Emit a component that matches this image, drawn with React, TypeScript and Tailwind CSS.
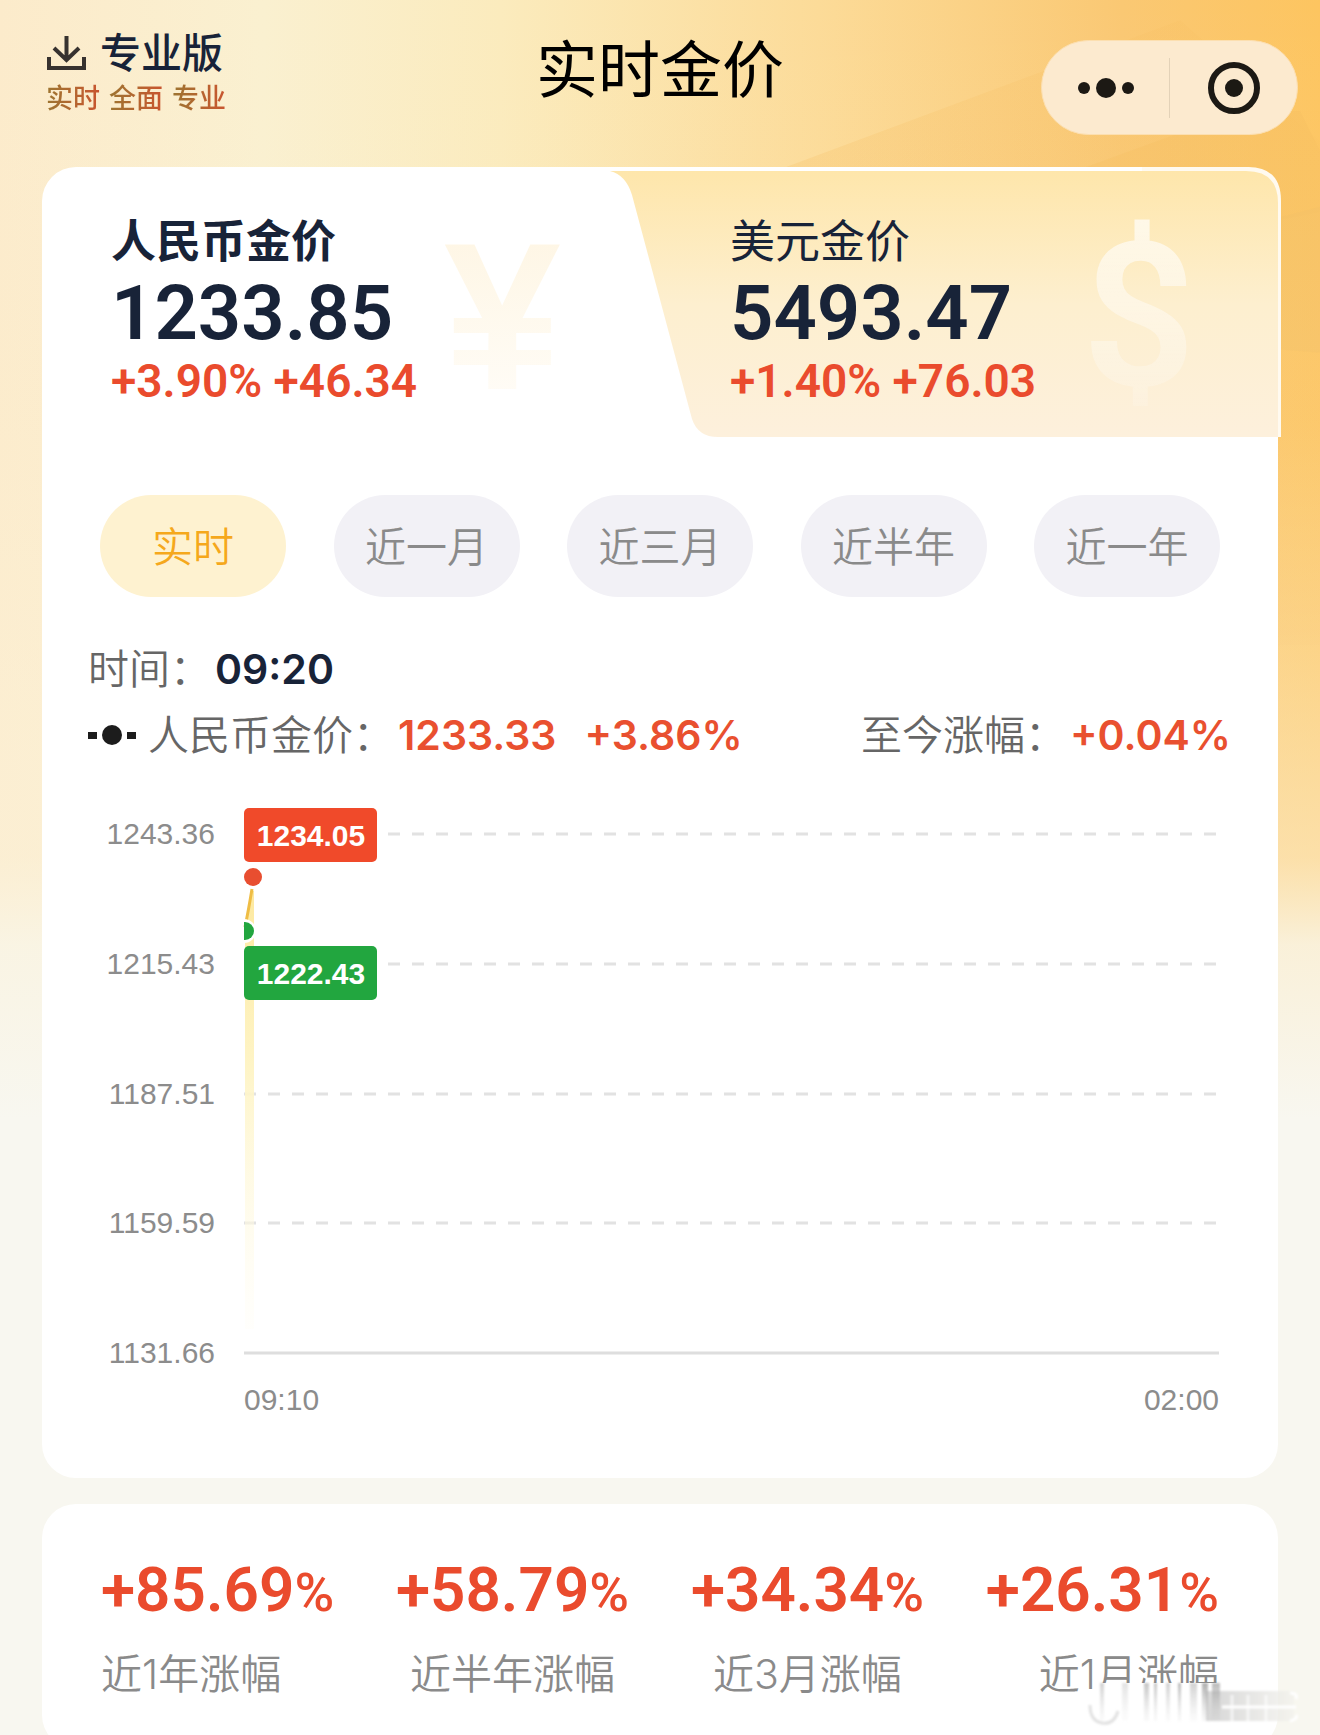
import React from 'react';

const ranges = ['实时', '近一月', '近三月', '近半年', '近一年'];

const stats = [
  { label: '近1年涨幅', value: '+85.69', align: 'items-start' },
  { label: '近半年涨幅', value: '+58.79', align: 'items-center' },
  { label: '近3月涨幅', value: '+34.34', align: 'items-center' },
  { label: '近1月涨幅', value: '+26.31', align: 'items-end' },
];

const gridRows = [
  { y: 55, label: '1243.36', from: 306 },
  { y: 185, label: '1215.43', from: 306 },
  { y: 315, label: '1187.51', from: 162 },
  { y: 444, label: '1159.59', from: 162 },
];

const Backdrop: React.FC = () => (
  <svg
    className="absolute inset-0 h-full w-full"
    viewBox="0 0 1320 1735"
    preserveAspectRatio="none"
    aria-hidden="true"
  >
    <defs>
      <linearGradient id="sky" x1="0" y1="0" x2="1320" y2="0" gradientUnits="userSpaceOnUse">
        <stop offset="0" stopColor="#fcebcb" />
        <stop offset="0.2" stopColor="#faf0d0" />
        <stop offset="0.38" stopColor="#fbebbd" />
        <stop offset="0.62" stopColor="#fcdb98" />
        <stop offset="0.85" stopColor="#fac873" />
        <stop offset="1" stopColor="#fdc560" />
      </linearGradient>
      <linearGradient id="fade" x1="0" y1="0" x2="0" y2="1735" gradientUnits="userSpaceOnUse">
        <stop offset="0" stopColor="#fbf3dc" stopOpacity="0" />
        <stop offset="0.24" stopColor="#fbf3dc" stopOpacity="0.1" />
        <stop offset="0.36" stopColor="#fbf3dc" stopOpacity="0.3" />
        <stop offset="0.49" stopColor="#fbf1d8" stopOpacity="0.6" />
        <stop offset="0.54" stopColor="#f9f5e6" stopOpacity="0.9" />
        <stop offset="0.64" stopColor="#f8f7f0" />
      </linearGradient>
      <linearGradient id="ray" x1="780" y1="168" x2="1320" y2="0" gradientUnits="userSpaceOnUse">
        <stop offset="0" stopColor="#f5bb5c" stopOpacity="0.25" />
        <stop offset="1" stopColor="#f5bb5c" stopOpacity="0.1" />
      </linearGradient>
    </defs>
    <rect width="1320" height="1735" fill="url(#sky)" />
    <path d="M780 168L1180 20L1320 140V640H780z" fill="url(#ray)" />
    <path d="M1080 168L1240 110H1300L1320 150V210L1270 220z" fill="#f5bc5e" opacity="0.3" />
    <path d="M1270 218L1320 205V350L1270 346z" fill="#f3bd62" opacity="0.4" />
    <rect width="1320" height="1735" fill="url(#fade)" />
  </svg>
);

const Header: React.FC = () => (
  <header className="relative grid h-[167px] grid-cols-[1fr_auto_1fr] items-start px-[22px]">
    <a href="#pro" className="flex flex-col pt-[28px] pl-6">
      <span className="flex items-center gap-3 text-[41px] leading-[50px] font-medium text-[#182338]">
        <svg width="42" height="38" viewBox="0 0 42 38" fill="none" stroke="#37322f" strokeWidth="4" aria-hidden="true">
          <path d="M3 23v11h35V23" />
          <path d="M20.500 2v23M8 14l12.500 12L33 14" />
        </svg>
        专业版
      </span>
      <span className="flex gap-[9px] text-[27px] leading-[42px] font-medium">
        {['实时', '全面', '专业'].map(word => (
          <span key={word} className="bg-linear-to-r from-[#9c7430] to-[#c9542f] bg-clip-text text-transparent">
            {word}
          </span>
        ))}
      </span>
    </a>
    <h1 className="pt-[35px] text-[62px] leading-[72px] text-black">实时金价</h1>
    <div className="mt-[40px] flex h-[95px] w-[257px] items-center justify-self-end rounded-full border border-[#fcdfb0] bg-[#fceacf]">
      <button type="button" aria-label="更多" className="flex flex-1 items-center justify-center">
        <svg width="58" height="24" viewBox="0 0 58 24" fill="#1c1914">
          <circle cx="7" cy="12" r="6" />
          <circle cx="29" cy="12" r="10" />
          <circle cx="51" cy="12" r="6" />
        </svg>
      </button>
      <span className="h-[60px] w-px bg-[#e3d2b8]" />
      <button type="button" aria-label="关闭" className="flex flex-1 items-center justify-center">
        <svg width="54" height="54" viewBox="0 0 54 54">
          <circle cx="27" cy="27" r="23" fill="none" stroke="#1c1914" strokeWidth="6" />
          <circle cx="27" cy="27" r="9" fill="#1c1914" />
        </svg>
      </button>
    </div>
  </header>
);

type QuoteProps = { name: string; price: string; change: string; active?: boolean };

const Quote: React.FC<QuoteProps> = ({ name, price, change, active }) => (
  <button type="button" className="flex flex-col items-start text-left">
    <span className={`text-[45px] leading-[55px] text-[#182338] ${active ? 'font-bold' : 'font-normal'}`}>{name}</span>
    <span className="font-[Roboto] text-[76px] leading-[88px] font-semibold text-[#182338]">{price}</span>
    <span className="font-[Roboto] text-[46px] leading-[48px] font-semibold text-[#ea4b2d]">{change}</span>
  </button>
);

const QuoteTabs: React.FC = () => (
  <div className="relative h-[270px]">
    <svg
      className="absolute inset-y-0 left-0 h-full w-[calc(100%+3px)]"
      viewBox="0 0 1239 270"
      preserveAspectRatio="none"
      aria-hidden="true"
    >
      <defs>
        <linearGradient id="usd" x1="0" y1="0" x2="0" y2="1">
          <stop offset="0" stopColor="#fee6ab" />
          <stop offset="0.5" stopColor="#fdefcf" />
          <stop offset="1" stopColor="#fdf0dc" />
        </linearGradient>
      </defs>
      <path d="M1100 0H1206Q1239 0 1239 34V270H1100z" fill="#fffaf0" />
      <path d="M568 4H1204Q1236 4 1236 36V270H676Q656 270 650 252L590 28Q584 8 568 4z" fill="url(#usd)" />
    </svg>
    <div className="relative grid h-full grid-cols-[619px_1fr] pt-[47px]">
      <div className="relative pl-[69px]">
        <span className="absolute top-[-2px] left-[402px] bg-linear-to-b from-[#fef5e2] to-[#fffdf9] bg-clip-text font-['Liberation_Sans'] text-[210px] leading-[210px] font-bold text-transparent">
          ¥
        </span>
        <div className="relative">
          <Quote name="人民币金价" price="1233.85" change="+3.90% +46.34" active />
        </div>
      </div>
      <div className="relative pl-[69px]">
        <span className="absolute top-[-2px] right-[82px] bg-linear-to-b from-white/70 to-white/10 bg-clip-text font-[Roboto] text-[200px] leading-[210px] font-semibold text-transparent">
          $
        </span>
        <div className="relative">
          <Quote name="美元金价" price="5493.47" change="+1.40% +76.03" />
        </div>
      </div>
    </div>
  </div>
);

const Chart: React.FC = () => (
  <svg
    className="mt-[14px] h-auto w-full font-['Liberation_Sans']"
    viewBox="0 0 1236 699"
    role="img"
    aria-label="人民币金价"
    fontSize="30"
  >
    <defs>
      <linearGradient id="area" x1="0" y1="0" x2="0" y2="1">
        <stop offset="0" stopColor="#fde9a0" />
        <stop offset="0.4" stopColor="#fef4c6" />
        <stop offset="1" stopColor="#fffdf4" stopOpacity="0.3" />
      </linearGradient>
    </defs>
    <g transform="translate(40 0)">
      {gridRows.map(row => (
        <g key={row.label}>
          <text x="133" y={row.y + 10} textAnchor="end" fill="#8c8c8c">
            {row.label}
          </text>
          <path d={`M${row.from} ${row.y}H1136`} stroke="#e2e2e2" strokeWidth="3" strokeDasharray="12 12" />
        </g>
      ))}
      <text x="133" y="584" textAnchor="end" fill="#8c8c8c">
        1131.66
      </text>
      <path d="M162 574H1137" stroke="#dedede" strokeWidth="3" />
      <path d="M163 150L170 112H172V550H163z" fill="url(#area)" />
      <path d="M163 148Q166 134 170 110" fill="none" stroke="#efbd45" strokeWidth="3" />
      <circle cx="171" cy="98" r="11" fill="#fff" />
      <circle cx="171" cy="98" r="9" fill="#e84e30" />
      <path d="M162 140A12 12 0 0 1 162 164z" fill="#fff" />
      <path d="M162 143H163A9 9 0 0 1 163 161H162z" fill="#22a63f" />
      <rect x="162" y="29" width="133" height="54" rx="5" fill="#f04a2a" />
      <text x="229" y="67" textAnchor="middle" fill="#fff" fontWeight="700">
        1234.05
      </text>
      <rect x="162" y="167" width="133" height="54" rx="5" fill="#22a63f" />
      <text x="229" y="205" textAnchor="middle" fill="#fff" fontWeight="700">
        1222.43
      </text>
      <text x="162" y="631" fill="#8c8c8c">
        09:10
      </text>
      <text x="1137" y="631" textAnchor="end" fill="#8c8c8c">
        02:00
      </text>
    </g>
  </svg>
);

const streaks = [
  [18, 4, 0.4], [40, 6, 0.25], [62, 5, 0.5], [72, 3, 0.5], [84, 4, 0.4], [96, 3, 0.6], [108, 7, 0.4],
  [120, 6, 0.7], [130, 8, 0.6],
];

// Smeared stamp over the last figure
const Stamp: React.FC = () => (
  <svg className="absolute right-[12px] bottom-[18px]" width="226" height="56" viewBox="0 0 226 56" aria-hidden="true">
    <defs>
      <linearGradient id="smear" x1="0" y1="0" x2="0" y2="1">
        <stop offset="0" stopColor="#8c8c8c" />
        <stop offset="1" stopColor="#ccc" stopOpacity="0.2" />
      </linearGradient>
      <linearGradient id="haze" x1="0" y1="0" x2="1" y2="0">
        <stop offset="0" stopColor="#c4c4c4" />
        <stop offset="1" stopColor="#f2f1ec" />
      </linearGradient>
      <filter id="soft">
        <feGaussianBlur stdDeviation="1.200" />
      </filter>
    </defs>
    <path d="M12 8H138V48H12z" fill="#fff" />
    <g filter="url(#soft)">
      <rect x="124" y="16" width="88" height="30" fill="url(#haze)" opacity="0.7" />
      {streaks.map(([x, w, o]) => (
        <rect key={x} x={x} y="8" width={w} height="38" fill="url(#smear)" opacity={o} />
      ))}
      <path d="M8 30Q8 46 20 48T36 36" fill="none" stroke="#e2e2e2" strokeWidth="3" />
      <path d="M150 20V46M166 20V46M184 20V46" fill="none" stroke="#fff" strokeWidth="3" opacity="0.6" />
      <path d="M140 32H208M208 18Q216 18 214 24M206 32H214M208 46Q216 44 214 40" fill="none" stroke="#fff" strokeWidth="3" />
    </g>
  </svg>
);

const App: React.FC = () => {
  return (
    <div className="relative min-h-screen overflow-hidden bg-[#f8f7f0] font-[Inter,'Noto_Sans_CJK_SC',sans-serif]">
      <Backdrop />
      <Header />
      <main className="relative mx-[42px] flex flex-col gap-[26px]">
        <section className="rounded-[34px] bg-white">
          <QuoteTabs />
          <div className="flex justify-between gap-6 px-[58px] pt-[58px]">
            {ranges.map((range, i) => (
              <button
                key={range}
                type="button"
                className={`h-[102px] w-[186px] rounded-full pt-1 text-[41px] font-[350] ${
                  i === 0 ? 'bg-[#fef2d0] text-[#f5a81c]' : 'bg-[#f2f1f6] text-[#8a8a8a]'
                }`}
              >
                {range}
              </button>
            ))}
          </div>
          <div className="flex flex-col gap-[6px] pt-[42px] pr-[47px] pl-[46px] text-[41px] leading-[60px] font-[350] text-[#666]">
            <p>
              时间：<span className="ml-1 font-semibold text-[#182338]">09:20</span>
            </p>
            <div className="flex items-center justify-between">
              <p className="flex items-center">
                <svg className="mr-3" width="48" height="22" viewBox="0 0 48 22" fill="#1c1c1c" aria-hidden="true">
                  <path d="M0 8h9v7H0zM39 8h9v7h-9z" />
                  <circle cx="24" cy="11" r="10" />
                </svg>
                人民币金价：
                <span className="ml-1 font-semibold text-[#e9502f]">1233.33</span>
                <span className="ml-7 font-semibold text-[#e9502f]">+3.86%</span>
              </p>
              <p>
                至今涨幅：<span className="ml-1 font-semibold text-[#e9502f]">+0.04%</span>
              </p>
            </div>
          </div>
          <Chart />
        </section>
        <section className="relative flex h-[245px] justify-between rounded-[34px] bg-white px-[59px] pt-[50px]">
          {stats.map(stat => (
            <div key={stat.label} className={`flex flex-col ${stat.align}`}>
              <span className="font-[Roboto] text-[62px] leading-[72px] font-semibold text-[#ea4b2d]">
                {stat.value}
                <span className="text-[54px] font-medium">%</span>
              </span>
              <span className="mt-[15px] text-[41px] leading-[60px] font-[350] text-[#8a8a8a]">{stat.label}</span>
            </div>
          ))}
        </section>
      </main>
      <Stamp />
    </div>
  );
};

export default App;
